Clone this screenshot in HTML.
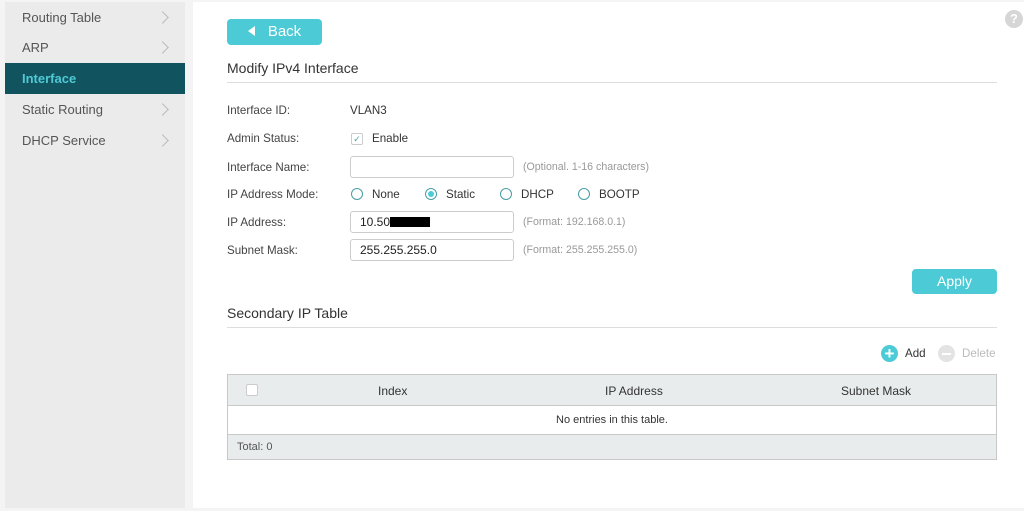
<!DOCTYPE html>
<html><head><style>
*{box-sizing:border-box;margin:0;padding:0}
body{width:1024px;height:511px;background:#f4f4f4;font-family:"Liberation Sans",sans-serif;position:relative;overflow:hidden;color:#333}
.side{position:absolute;left:5px;top:2px;width:180px;height:506px;background:#ebebeb}
.item{position:absolute;left:0;width:180px;height:31px;font-size:13px;color:#555;padding-left:17px;line-height:31px}
.item .ch{position:absolute;right:18px;top:11px;width:9px;height:9px;border-right:1.2px solid #bbb;border-top:1.2px solid #bbb;transform:rotate(45deg)}
.act{background:#11535f;color:#4fcad5;font-weight:bold}
.main{position:absolute;left:193px;top:2px;width:831px;height:506px;background:#fff}
.a{position:absolute;white-space:nowrap}
.lbl{font-size:11.6px;color:#444}
.btn{background:#4ccbd6;color:#fff;border-radius:4px;text-align:center}
.inp{position:absolute;left:350px;width:164px;height:22px;border:1px solid #ccc;border-radius:3px;font-size:12px;padding-left:9px;line-height:20px;color:#222}
.hint{font-size:10.6px;color:#999}
.rad{position:absolute;width:12px;height:12px;border:1.3px solid #4a9da6;border-radius:50%}
.hr{position:absolute;left:227px;width:770px;height:1px;background:#ddd}
</style></head><body>
<div class="side">
<div class="item" style="top:0">Routing Table<span class="ch"></span></div>
<div class="item" style="top:30px">ARP<span class="ch"></span></div>
<div class="item act" style="top:61px">Interface</div>
<div class="item" style="top:92px">Static Routing<span class="ch"></span></div>
<div class="item" style="top:123px">DHCP Service<span class="ch"></span></div>
</div>
<div class="main"></div>
<div class="a" style="left:1005px;top:10px;width:18px;height:18px;border-radius:50%;background:#d6d6d6;color:#fff;font-size:13px;font-weight:bold;text-align:center;line-height:18px">?</div>
<div class="a btn" style="left:227px;top:19px;width:95px;height:26px;font-size:15px;line-height:26px"><span style="display:inline-block;width:0;height:0;border-top:5px solid transparent;border-bottom:5px solid transparent;border-right:7px solid #fff;margin-right:13px;vertical-align:0"></span>Back</div>
<div class="a" style="left:227px;top:60px;font-size:14px;color:#333">Modify IPv4 Interface</div>
<div class="hr" style="top:82px"></div>
<div class="a lbl" style="left:227px;top:104px">Interface ID:</div>
<div class="a lbl" style="left:350px;top:104px;color:#333">VLAN3</div>
<div class="a lbl" style="left:227px;top:132px">Admin Status:</div>
<div class="a" style="left:351px;top:133px;width:12px;height:12px;border:1px solid #ccc;border-radius:2px;font-size:9px;color:#4a9da6;text-align:center;line-height:10px">✓</div>
<div class="a lbl" style="left:372px;top:132px;color:#333">Enable</div>
<div class="a lbl" style="left:227px;top:161px">Interface Name:</div>
<div class="inp" style="top:156px"></div>
<div class="a hint" style="left:523px;top:161px">(Optional. 1-16 characters)</div>
<div class="a lbl" style="left:227px;top:188px">IP Address Mode:</div>
<div class="rad" style="left:351px;top:188px"></div><div class="a lbl" style="left:372px;top:188px;color:#333">None</div>
<div class="rad" style="left:425px;top:188px"><div style="margin:2px;width:6px;height:6px;border-radius:50%;background:#4ccbd6"></div></div><div class="a lbl" style="left:446px;top:188px;color:#333">Static</div>
<div class="rad" style="left:500px;top:188px"></div><div class="a lbl" style="left:521px;top:188px;color:#333">DHCP</div>
<div class="rad" style="left:578px;top:188px"></div><div class="a lbl" style="left:599px;top:188px;color:#333">BOOTP</div>
<div class="a lbl" style="left:227px;top:216px">IP Address:</div>
<div class="inp" style="top:211px">10.50<span style="display:inline-block;width:40px;height:10px;background:#000;vertical-align:-1px"></span></div>
<div class="a hint" style="left:523px;top:216px">(Format: 192.168.0.1)</div>
<div class="a lbl" style="left:227px;top:244px">Subnet Mask:</div>
<div class="inp" style="top:239px">255.255.255.0</div>
<div class="a hint" style="left:523px;top:244px">(Format: 255.255.255.0)</div>
<div class="a btn" style="left:912px;top:269px;width:85px;height:25px;font-size:14px;line-height:25px">Apply</div>
<div class="a" style="left:227px;top:305px;font-size:14px;color:#333">Secondary IP Table</div>
<div class="hr" style="top:327px"></div>
<div class="a" style="left:881px;top:345px;width:17px;height:17px;border-radius:50%;background:#4ccbd6;color:#fff;font-size:17px;font-weight:bold;text-align:center;line-height:17px">+</div>
<div class="a lbl" style="left:905px;top:347px;color:#333">Add</div>
<div class="a" style="left:938px;top:345px;width:17px;height:17px;border-radius:50%;background:#e3e3e3"><div style="margin:7.5px 4px;height:2px;background:#fff"></div></div>
<div class="a lbl" style="left:962px;top:347px;color:#bbb">Delete</div>
<div class="a" style="left:227px;top:374px;width:770px;height:86px;border:1px solid #c8c8c8">
<div style="position:absolute;left:0;top:0;width:768px;height:31px;background:#e9ecec;border-bottom:1px solid #c8c8c8;font-size:12px;color:#333">
<div style="position:absolute;left:18px;top:9px;width:12px;height:12px;border:1px solid #ccc;border-radius:2px;background:#fff"></div>
<span style="position:absolute;left:150px;top:9px">Index</span>
<span style="position:absolute;left:377px;top:9px">IP Address</span>
<span style="position:absolute;left:613px;top:9px">Subnet Mask</span></div>
<div style="position:absolute;left:0;top:31px;width:768px;height:29px;text-align:center;font-size:11px;line-height:29px;color:#333">No entries in this table.</div>
<div style="position:absolute;left:0;top:59px;width:768px;height:25px;background:#e9ecec;border-top:1px solid #c8c8c8;font-size:11px;line-height:24px;padding-left:9px;color:#555">Total: 0</div>
</div>
</body></html>
